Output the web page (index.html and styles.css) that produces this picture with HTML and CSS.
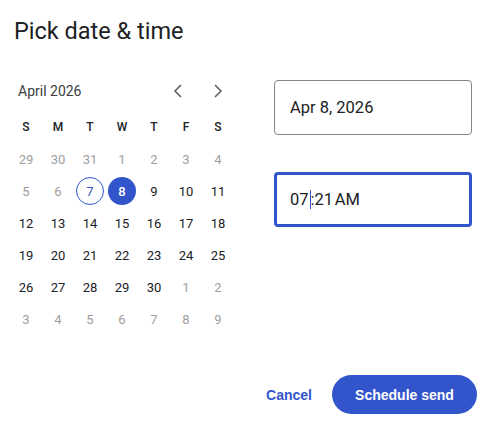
FILE: index.html
```html
<!DOCTYPE html>
<html>
<head>
<meta charset="utf-8">
<link rel="stylesheet" href="styles.css">
</head>
<body>
<div class="dialog">
  <h1 class="title">Pick date &amp; time</h1>
  <div class="main">
    <div class="cal">
      <div class="cal-head">
        <span class="month">April 2026</span>
        <div class="navs">
          <span class="nav"><svg width="10" height="14" viewBox="0 0 10 14"><path d="M8 1 L2 7 L8 13" fill="none" stroke="#5f6368" stroke-width="1.6"/></svg></span>
          <span class="nav"><svg width="10" height="14" viewBox="0 0 10 14"><path d="M2 1 L8 7 L2 13" fill="none" stroke="#5f6368" stroke-width="1.6"/></svg></span>
        </div>
      </div>
      <div class="grid">
        <span class="dow">S</span><span class="dow">M</span><span class="dow">T</span><span class="dow">W</span><span class="dow">T</span><span class="dow">F</span><span class="dow">S</span>
        <span class="d o">29</span><span class="d o">30</span><span class="d o">31</span><span class="d o">1</span><span class="d o">2</span><span class="d o">3</span><span class="d o">4</span>
        <span class="d o">5</span><span class="d o">6</span><span class="d today"><i>7</i></span><span class="d sel"><i>8</i></span><span class="d">9</span><span class="d">10</span><span class="d">11</span>
        <span class="d">12</span><span class="d">13</span><span class="d">14</span><span class="d">15</span><span class="d">16</span><span class="d">17</span><span class="d">18</span>
        <span class="d">19</span><span class="d">20</span><span class="d">21</span><span class="d">22</span><span class="d">23</span><span class="d">24</span><span class="d">25</span>
        <span class="d">26</span><span class="d">27</span><span class="d">28</span><span class="d">29</span><span class="d">30</span><span class="d o">1</span><span class="d o">2</span>
        <span class="d o">3</span><span class="d o">4</span><span class="d o">5</span><span class="d o">6</span><span class="d o">7</span><span class="d o">8</span><span class="d o">9</span>
      </div>
    </div>
    <div class="fields">
      <div class="field">Apr 8, 2026</div>
      <div class="field focus">07<span class="caret"></span>:21&#8202;AM</div>
    </div>
  </div>
  <div class="actions">
    <button class="btn-text">Cancel</button>
    <button class="btn-fill">Schedule send</button>
  </div>
</div>
</body>
</html>
```
FILE: styles.css
```css
html, body { margin: 0; padding: 0; background: #fff; }
body { font-family: Roboto, "Open Sans", sans-serif; color: #202124; }
.dialog { width: 493px; height: 431px; box-sizing: border-box; padding: 16px 16px 0 14px; position: relative; }
.title { margin: 0; font-weight: 400; font-size: 23.5px; line-height: 30px; color: #202124; letter-spacing: 0; }
.main { display: flex; margin-top: 33px; }
.cal { width: 224px; margin-left: -4px; }
.cal-head { display: flex; align-items: center; justify-content: space-between; height: 24px; padding-left: 8px; }
.month { font-size: 14px; color: #3c4043; }
.navs { display: flex; gap: 30px; padding-right: 11px; }
.nav { width: 10px; height: 14px; display: flex; }
.grid { display: grid; grid-template-columns: repeat(7, 32px); grid-template-rows: 32px; grid-auto-rows: 32px; margin-top: 8px; }
.dow, .d { display: flex; align-items: center; justify-content: center; font-size: 13px; }
.dow { font-weight: 500; font-size: 12px; color: #202124; height: 24px; align-self: start; margin-top: 4px; }
.d { color: #202124; }
.d.o { color: #9e9e9e; }
.d i { font-style: normal; width: 28px; height: 28px; border-radius: 50%; display: flex; align-items: center; justify-content: center; box-sizing: border-box; }
.today i { border: 1px solid #3355cc; color: #3355cc; }
.sel i { background: #3355cc; color: #fff; font-weight: 500; }
.fields { display: flex; flex-direction: column; gap: 37px; margin-left: 40px; margin-top: 1px; }
.field { width: 198px; height: 55px; box-sizing: border-box; border: 1px solid #80868b; border-radius: 4px; display: flex; align-items: center; padding-left: 15px; font-size: 16.5px; color: #202124; }
.field.focus { border: 3px solid #3355cc; padding-left: 13px; height: 55px; }
.caret { display: inline-block; width: 1px; height: 19px; background: #3355cc; margin: 0 0 0 1px; }
.actions { position: absolute; right: 16px; top: 375px; display: flex; align-items: center; gap: 20px; }
button { font-family: "Liberation Sans", Arial, sans-serif; font-size: 14px; font-weight: 700; border: none; cursor: pointer; }
.btn-text { background: none; color: #3355cc; padding: 0; }
.btn-fill { background: #3355cc; color: #fff; height: 39px; width: 145px; border-radius: 20px; }
```
